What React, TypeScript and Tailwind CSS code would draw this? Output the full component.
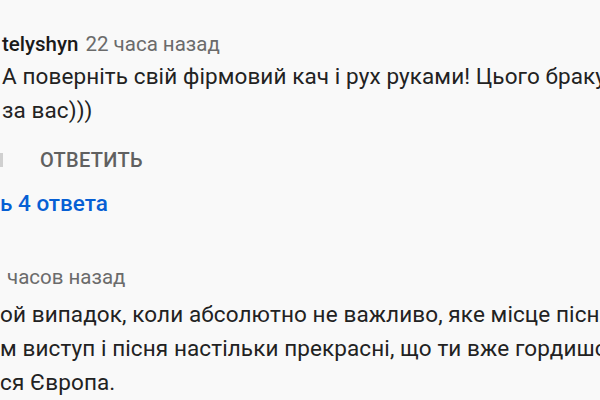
import React from 'react';

const Comment: React.FC<{
  name?: string;
  time: string;
  lines: string[];
  gap: string;
  headPad?: string;
}> = ({ name, time, lines, gap, headPad = '' }) => (
  <div>
    <div className={`flex items-baseline gap-[7px] h-[30px] text-[20.5px] ${headPad}`}>
      {name && <span className="font-medium text-[#1a1a1a]">{name}</span>}
      <span className="text-[#6b6b6b]">{time}</span>
    </div>
    <div className={`text-[22.5px] leading-[34px] tracking-[0.1px] text-[#222] ${gap}`}>
      {lines.map((l, i) => (
        <div key={i} className="whitespace-nowrap">
          {l}
        </div>
      ))}
    </div>
  </div>
);

export default function App() {
  return (
    <div
      className="w-[600px] h-[400px] overflow-hidden bg-[#f9f9f9] pl-[2px]"
      style={{ fontFamily: 'Roboto, "Noto Sans", sans-serif' }}
    >
      <div className="pt-[29px]">
        <Comment
          name="telyshyn"
          time="22 часа назад"
          gap="mt-0"
          lines={['А поверніть свій фірмовий кач і рух руками! Цього бракує', 'за вас)))']}
        />
      </div>

      <div className="flex items-center h-[26px] mt-[20px]">
        <span className="w-[3px] h-[14px] bg-[#d0d0d0] ml-[-2px]" />
        <span className="ml-[37px] text-[20px] font-medium text-[#606060] tracking-[0.3px]">ОТВЕТИТЬ</span>
      </div>

      <div className="mt-[18px] ml-[-2px] text-[22.5px] font-medium text-[#065fd4] h-[26px] flex items-center">
        ь 4 ответа
      </div>

      <div className="mt-[45px]">
        <Comment
          time="часов назад"
          headPad="pl-[5px]"
          gap="mt-[5px] ml-[-2px]"
          lines={[
            'ой випадок, коли абсолютно не важливо, яке місце пісня',
            'м виступ і пісня настільки прекрасні, що ти вже гордишся',
            'ся Європа.',
          ]}
        />
      </div>
    </div>
  );
}
